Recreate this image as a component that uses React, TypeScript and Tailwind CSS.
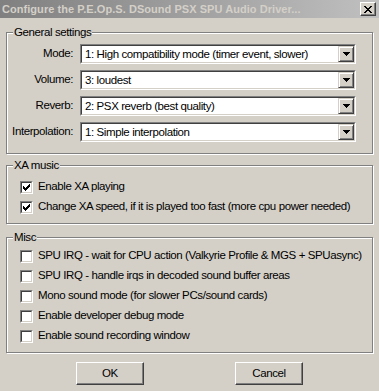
import React from "react";

const font = "font-['Liberation_Sans',Arial,sans-serif]";

function Group({
  title,
  className,
  children,
}: {
  title: string;
  className?: string;
  children: React.ReactNode;
}) {
  return (
    <fieldset
      className={`border border-[#808080] shadow-[1px_1px_0_#fff,inset_1px_1px_0_#fff] ${className ?? ""}`}
    >
      <legend className="ml-[6px] px-[1px] bg-[#d4d0c8] leading-[14px]">{title}</legend>
      {children}
    </fieldset>
  );
}

function Arrow() {
  return (
    <svg width="7" height="4" viewBox="0 0 7 4" shapeRendering="crispEdges">
      <rect x="0" y="0" width="7" height="1" fill="#000" />
      <rect x="1" y="1" width="5" height="1" fill="#000" />
      <rect x="2" y="2" width="3" height="1" fill="#000" />
      <rect x="3" y="3" width="1" height="1" fill="#000" />
    </svg>
  );
}

function Combo({ label, value }: { label: string; value: string }) {
  return (
    <div className="flex items-center">
      <span className="w-[66px] text-right whitespace-nowrap">{label}</span>
      <div className="ml-[7px] w-[276px] h-[20px] flex border border-t-[#808080] border-l-[#808080] border-b-white border-r-white">
        <div className="flex-1 flex border border-t-[#404040] border-l-[#404040] border-b-[#d4d0c8] border-r-[#d4d0c8] bg-white">
          <span className="flex-1 pl-[3px] leading-[16px] whitespace-nowrap overflow-hidden">
            {value}
          </span>
          <div className="w-[16px] h-full flex items-center justify-center bg-[#d4d0c8] border border-t-[#d4d0c8] border-l-[#d4d0c8] border-b-[#404040] border-r-[#404040] shadow-[inset_1px_1px_0_#fff,inset_-1px_-1px_0_#808080]">
            <Arrow />
          </div>
        </div>
      </div>
    </div>
  );
}

function Tick() {
  const cols = [2, 3, 4, 3, 2, 1, 0];
  return (
    <svg width="7" height="7" viewBox="0 0 7 7" shapeRendering="crispEdges">
      {cols.map((y, x) => (
        <rect key={x} x={x} y={y} width="1" height="3" fill="#000" />
      ))}
    </svg>
  );
}

function Check({ label, checked }: { label: string; checked?: boolean }) {
  return (
    <div className="flex items-center h-[20px] pl-[13px]">
      <div className="w-[13px] h-[13px] border border-t-[#808080] border-l-[#808080] border-b-white border-r-white">
        <div className="w-full h-full flex items-center justify-center bg-white border border-t-[#404040] border-l-[#404040] border-b-[#d4d0c8] border-r-[#d4d0c8]">
          {checked && <Tick />}
        </div>
      </div>
      <span className="ml-[5px] whitespace-nowrap">{label}</span>
    </div>
  );
}

function Button({ children }: { children: React.ReactNode }) {
  return (
    <button className="w-[68px] h-[23px] flex items-center justify-center bg-[#d4d0c8] border border-t-white border-l-white border-b-[#404040] border-r-[#404040] shadow-[inset_-1px_-1px_0_#808080]">
      {children}
    </button>
  );
}

export default function App() {
  return (
    <div
      className={`w-[379px] h-[391px] overflow-hidden bg-[#d4d0c8] text-black text-[11.5px] tracking-[-0.4px] ${font}`}
    >
      <div className="h-[18px] flex items-center justify-between pl-[2px] pr-[3px] bg-gradient-to-r from-[#808080] to-[#c0c0c0]">
        <span className="font-bold text-[11px] tracking-[0.05px] text-[#d4d0c8] whitespace-nowrap">
          Configure the P.E.Op.S. DSound PSX SPU Audio Driver...
        </span>
        <div className="w-[16px] h-[14px] flex items-center justify-center bg-[#d4d0c8] border border-t-white border-l-white border-b-[#404040] border-r-[#404040] shadow-[inset_-1px_-1px_0_#808080]">
          <svg width="8" height="7" viewBox="0 0 8 7" shapeRendering="crispEdges">
            {[0, 1, 2, 3, 4, 5, 6].map((y) => {
              const a = y <= 3 ? y : 6 - y;
              return (
                <g key={y}>
                  <rect x={a} y={y} width="2" height="1" fill="#000" />
                  <rect x={6 - a} y={y} width="2" height="1" fill="#000" />
                </g>
              );
            })}
          </svg>
        </div>
      </div>

      <div className="flex flex-col px-[6px]">
        <Group title="General settings" className="mt-[7px]">
          <div className="flex flex-col gap-[6px] pt-[5px] pb-[11px]">
            <Combo label="Mode:" value="1: High compatibility mode (timer event, slower)" />
            <Combo label="Volume:" value="3: loudest" />
            <Combo label="Reverb:" value="2: PSX reverb (best quality)" />
            <Combo label="Interpolation:" value="1: Simple interpolation" />
          </div>
        </Group>

        <Group title="XA music" className="mt-[4px]">
          <div className="flex flex-col pt-[5px] pb-[6px]">
            <Check label="Enable XA playing" checked />
            <Check label="Change XA speed, if it is played too fast (more cpu power needed)" checked />
          </div>
        </Group>

        <Group title="Misc" className="mt-[6px]">
          <div className="flex flex-col pt-[2px] pb-[6px]">
            <Check label="SPU IRQ - wait for CPU action (Valkyrie Profile & MGS + SPUasync)" />
            <Check label="SPU IRQ - handle irqs in decoded sound buffer areas" />
            <Check label="Mono sound mode (for slower PCs/sound cards)" />
            <Check label="Enable developer debug mode" />
            <Check label="Enable sound recording window" />
          </div>
        </Group>

        <div className="flex mt-[9px] pl-[70px] gap-[91px]">
          <Button>OK</Button>
          <Button>Cancel</Button>
        </div>
      </div>
    </div>
  );
}
